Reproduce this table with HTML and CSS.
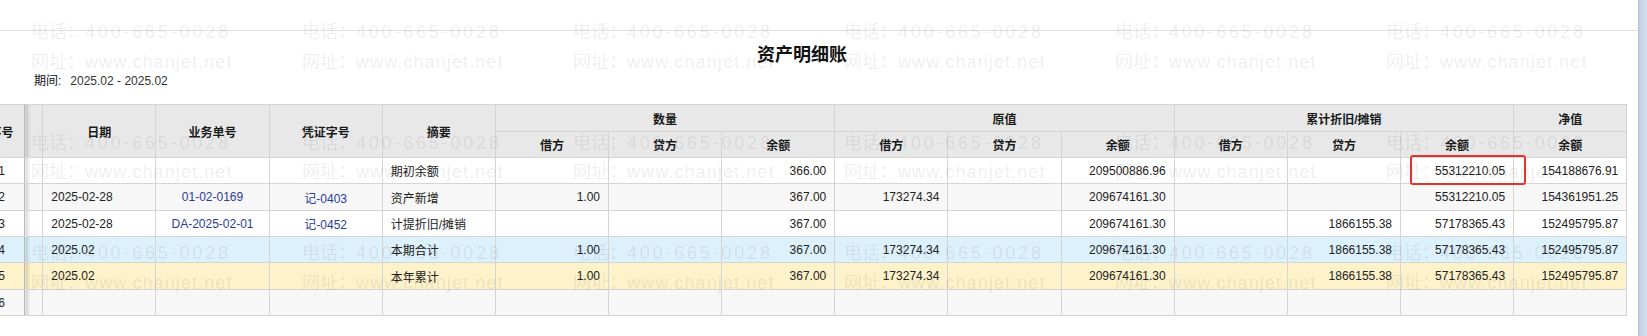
FILE: index.html
```html
<!DOCTYPE html>
<html lang="zh-CN">
<head>
<meta charset="utf-8">
<title>资产明细账</title>
<link rel="stylesheet" href="styles.css">
</head>
<body>
<div class="app">
  <div class="main">
    <div class="topbar"></div>
    <div class="report">
      <h1 class="title">资产明细账</h1>
      <div class="period"><span class="lbl">期间:</span><span class="val">2025.02 - 2025.02</span></div>
      <table class="grid">
        <colgroup>
          <col class="c-seq">
          <col class="c-gap">
          <col class="c"><col class="c"><col class="c"><col class="c">
          <col class="c"><col class="c"><col class="c">
          <col class="c"><col class="c"><col class="c">
          <col class="c"><col class="c"><col class="c">
          <col class="c">
        </colgroup>
        <thead>
          <tr class="h-tall">
            <th rowspan="2" class="seq">序号</th>
            <th rowspan="2" class="gap"></th>
            <th rowspan="2">日期</th>
            <th rowspan="2">业务单号</th>
            <th rowspan="2">凭证字号</th>
            <th rowspan="2">摘要</th>
            <th colspan="3">数量</th>
            <th colspan="3">原值</th>
            <th colspan="3">累计折旧/摊销</th>
            <th>净值</th>
          </tr>
          <tr>
            <th>借方</th><th>贷方</th><th>余额</th>
            <th>借方</th><th>贷方</th><th>余额</th>
            <th>借方</th><th>贷方</th><th>余额</th>
            <th>余额</th>
          </tr>
        </thead>
        <tbody>
          <tr>
            <td class="seq">1</td><td class="gap"></td>
            <td></td><td></td><td></td><td class="lft">期初余额</td>
            <td></td><td></td><td class="num">366.00</td>
            <td></td><td></td><td class="num">209500886.96</td>
            <td></td><td></td><td class="num mark">55312210.05<span class="redbox"></span></td>
            <td class="num">154188676.91</td>
          </tr>
          <tr class="alt h-tall">
            <td class="seq">2</td><td class="gap"></td>
            <td class="lft">2025-02-28</td><td class="ctr"><span class="link">01-02-0169</span></td><td class="ctr"><span class="link">记-0403</span></td><td class="lft">资产新增</td>
            <td class="num">1.00</td><td></td><td class="num">367.00</td>
            <td class="num">173274.34</td><td></td><td class="num">209674161.30</td>
            <td></td><td></td><td class="num">55312210.05</td>
            <td class="num">154361951.25</td>
          </tr>
          <tr>
            <td class="seq">3</td><td class="gap"></td>
            <td class="lft">2025-02-28</td><td class="ctr"><span class="link">DA-2025-02-01</span></td><td class="ctr"><span class="link">记-0452</span></td><td class="lft">计提折旧/摊销</td>
            <td></td><td></td><td class="num">367.00</td>
            <td></td><td></td><td class="num">209674161.30</td>
            <td></td><td class="num">1866155.38</td><td class="num">57178365.43</td>
            <td class="num">152495795.87</td>
          </tr>
          <tr class="sum-period">
            <td class="seq">4</td><td class="gap"></td>
            <td class="lft">2025.02</td><td></td><td></td><td class="lft">本期合计</td>
            <td class="num">1.00</td><td></td><td class="num">367.00</td>
            <td class="num">173274.34</td><td></td><td class="num">209674161.30</td>
            <td></td><td class="num">1866155.38</td><td class="num">57178365.43</td>
            <td class="num">152495795.87</td>
          </tr>
          <tr class="sum-year h-tall">
            <td class="seq">5</td><td class="gap"></td>
            <td class="lft">2025.02</td><td></td><td></td><td class="lft">本年累计</td>
            <td class="num">1.00</td><td></td><td class="num">367.00</td>
            <td class="num">173274.34</td><td></td><td class="num">209674161.30</td>
            <td></td><td class="num">1866155.38</td><td class="num">57178365.43</td>
            <td class="num">152495795.87</td>
          </tr>
          <tr class="alt">
            <td class="seq">6</td><td class="gap"></td>
            <td></td><td></td><td></td><td></td>
            <td></td><td></td><td></td>
            <td></td><td></td><td></td>
            <td></td><td></td><td></td>
            <td></td>
          </tr>
        </tbody>
      </table>
    </div>
    <div class="watermark">
      <div class="wm"><div>电话：<span class="tel">400-665-0028</span></div><div>网址：<span class="url">www.chanjet.net</span></div></div>
      <div class="wm"><div>电话：<span class="tel">400-665-0028</span></div><div>网址：<span class="url">www.chanjet.net</span></div></div>
      <div class="wm"><div>电话：<span class="tel">400-665-0028</span></div><div>网址：<span class="url">www.chanjet.net</span></div></div>
      <div class="wm"><div>电话：<span class="tel">400-665-0028</span></div><div>网址：<span class="url">www.chanjet.net</span></div></div>
      <div class="wm"><div>电话：<span class="tel">400-665-0028</span></div><div>网址：<span class="url">www.chanjet.net</span></div></div>
      <div class="wm"><div>电话：<span class="tel">400-665-0028</span></div><div>网址：<span class="url">www.chanjet.net</span></div></div>
      <div class="wm"><div>电话：<span class="tel">400-665-0028</span></div><div>网址：<span class="url">www.chanjet.net</span></div></div>
      <div class="wm"><div>电话：<span class="tel">400-665-0028</span></div><div>网址：<span class="url">www.chanjet.net</span></div></div>
      <div class="wm"><div>电话：<span class="tel">400-665-0028</span></div><div>网址：<span class="url">www.chanjet.net</span></div></div>
      <div class="wm"><div>电话：<span class="tel">400-665-0028</span></div><div>网址：<span class="url">www.chanjet.net</span></div></div>
      <div class="wm"><div>电话：<span class="tel">400-665-0028</span></div><div>网址：<span class="url">www.chanjet.net</span></div></div>
      <div class="wm"><div>电话：<span class="tel">400-665-0028</span></div><div>网址：<span class="url">www.chanjet.net</span></div></div>
      <div class="wm"><div>电话：<span class="tel">400-665-0028</span></div><div>网址：<span class="url">www.chanjet.net</span></div></div>
      <div class="wm"><div>电话：<span class="tel">400-665-0028</span></div><div>网址：<span class="url">www.chanjet.net</span></div></div>
      <div class="wm"><div>电话：<span class="tel">400-665-0028</span></div><div>网址：<span class="url">www.chanjet.net</span></div></div>
      <div class="wm"><div>电话：<span class="tel">400-665-0028</span></div><div>网址：<span class="url">www.chanjet.net</span></div></div>
      <div class="wm"><div>电话：<span class="tel">400-665-0028</span></div><div>网址：<span class="url">www.chanjet.net</span></div></div>
      <div class="wm"><div>电话：<span class="tel">400-665-0028</span></div><div>网址：<span class="url">www.chanjet.net</span></div></div>
    </div>
  </div>
  <div class="vscroll"></div>
</div>
</body>
</html>
```

FILE: styles.css
```css
html, body {
  margin: 0;
  padding: 0;
  background: #fff;
}

body {
  font-family: "Liberation Sans", "Noto Sans CJK SC", sans-serif;
  font-size: 12px;
  color: #222;
}

.app {
  display: flex;
  height: 336px;
  overflow: hidden;
}

.main {
  flex: 1;
  position: relative;
  overflow: hidden;
}

.vscroll {
  flex: none;
  width: 9px;
  background: linear-gradient(to right, #aebfd6 0, #c6d4e7 2px, #d3dfee 100%);
}

.topbar {
  height: 30px;
  border-bottom: 1px solid #e0e0e0;
}

.report {
  margin-left: -22px;
  width: 1648px;
}

.title {
  margin: 12px 0 0;
  font-size: 18px;
  line-height: 24px;
  font-weight: bold;
  text-align: center;
  color: #111;
}

.period {
  margin-top: 6px;
  padding-left: 56px;
  line-height: 16px;
}

.period .lbl {
  color: #111;
}

.period .val {
  margin-left: 9px;
  color: #333;
}

.grid {
  margin-top: 15px;
  border-collapse: collapse;
  table-layout: fixed;
  width: 1648.4px;
}

.grid col.c-seq { width: 46px; }
.grid col.c-gap { width: 18.3px; }
.grid col.c { width: 113.15px; }

.grid tr {
  height: 26px;
}

.grid tr.h-tall {
  height: 27px;
}

.grid th,
.grid td {
  border: 1px solid #d4d4d4;
  padding: 0 8px;
  white-space: nowrap;
  overflow: hidden;
  vertical-align: middle;
}

.grid th {
  background: #e8e8e8;
  font-weight: bold;
  color: #1a1a1a;
  text-align: center;
}

.grid td {
  color: #222;
}

.grid .seq {
  text-align: center;
  padding: 0;
  border-right-color: #b9b9b9;
}

.grid .gap {
  padding: 0;
  background-image: linear-gradient(to right, rgba(0, 0, 0, 0.16), rgba(0, 0, 0, 0) 5px);
}

.grid td.num {
  text-align: right;
}

.grid td.lft {
  text-align: left;
}

.grid td.ctr {
  text-align: center;
}

.grid .link {
  color: #2b3c9c;
}

.grid tbody tr.alt td {
  background-color: #f7f7f7;
}

.grid tbody tr.sum-period td {
  background-color: #dcf1fb;
}

.grid tbody tr.sum-year td {
  background-color: #fdf2c9;
}

.grid td.mark {
  position: relative;
  overflow: visible;
}

.redbox {
  position: absolute;
  left: 9px;
  right: -13px;
  top: -3px;
  bottom: -2px;
  border: 2px solid #e2342c;
  border-radius: 3px;
}

.watermark {
  position: absolute;
  inset: 0;
  pointer-events: none;
  display: grid;
  grid-template-columns: repeat(6, 271px);
  grid-auto-rows: 110.5px;
  padding: 18px 0 0 31px;
  color: rgba(0, 0, 0, 0.085);
  font-size: 18px;
  line-height: 29.5px;
  white-space: nowrap;
}

.watermark .tel {
  letter-spacing: 2.8px;
}

.watermark .url {
  letter-spacing: 1.1px;
}
```
